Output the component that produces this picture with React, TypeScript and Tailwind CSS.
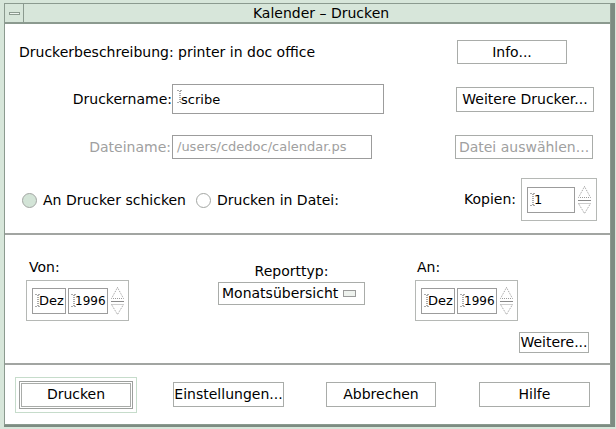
import React from 'react';

const IBeam = () => (
  <svg width="6" height="13" viewBox="0 0 6 13" className="mr-[-2px] shrink-0">
    <path d="M0.5 0.5h2M3.5 0.5h2M3 1v11M0.5 12.5h2M3.5 12.5h2" stroke="#555" strokeWidth="1" strokeDasharray="1 1" fill="none" />
  </svg>
);

const SpinArrows = () => (
  <svg width="15" height="30" viewBox="0 0 15 30" className="shrink-0">
    <path d="M7.5 1.5L13.5 12.5H1.5Z" fill="none" stroke="#9a9a9a" strokeDasharray="1 1" />
    <path d="M1 15.5H14" stroke="#8a8a8a" />
    <path d="M1.5 18.5H13.5L7.5 28.5Z" fill="none" stroke="#9a9a9a" strokeDasharray="1 1" />
  </svg>
);

function Button({ label, className = '', disabled = false }: { label: string; className?: string; disabled?: boolean }) {
  return (
    <div
      className={`flex items-center justify-center border border-[#a9aca9] bg-white ${disabled ? 'text-[#a0a0a0]' : 'text-black'} ${className}`}
    >
      {label}
    </div>
  );
}

function Field({ value, className = '', disabled = false }: { value: string; className?: string; disabled?: boolean }) {
  return (
    <div className={`flex items-center overflow-hidden whitespace-nowrap border border-[#9c9c9c] bg-white pl-[4px] ${className}`}>
      {!disabled && <IBeam />}
      <span className={disabled ? 'text-[#a0a0a0]' : 'text-black'}>{value}</span>
    </div>
  );
}

function DateSpin() {
  return (
    <div className="flex h-[41px] w-[103px] items-center gap-[2px] border border-[#b5b8b5] pl-[5px]">
      <Field value="Dez" className="h-[26px] w-[34px] !pl-[2px] text-[13px]" />
      <Field value="1996" className="h-[26px] w-[40px] !pl-[2px] text-[12px]" />
      <SpinArrows />
    </div>
  );
}

function Radio({ checked }: { checked?: boolean }) {
  return (
    <span
      className={`inline-block h-[15px] w-[15px] rounded-full border border-[#a3a6a3] ${checked ? 'bg-[#d3e4d7]' : 'bg-white'}`}
    />
  );
}

export default function App() {
  return (
    <div className="h-[429px] w-[616px] bg-[#d7e6da] pl-[4px] pt-[3px] pr-[1px] font-['DejaVu_Sans',sans-serif] text-[14px] text-black">
      <div className="flex h-[424px] flex-col border-r-[4px] border-b-[2px] border-[#7d8c82]">
        <div className="flex h-full flex-col border border-[#8b9a8f] bg-white">
          {/* Title bar */}
          <div className="flex h-[20px] shrink-0 border-b-2 border-[#8b9a8f] bg-[#d7e6da]">
            <div className="flex w-[19px] items-center justify-center border-r border-[#8b9a8f]">
              <span className="block h-[3px] w-[11px] border border-[#8b9a8f] bg-[#eef5ef]" />
            </div>
            <div className="flex flex-1 items-center justify-center pl-[8px] pt-[1px]">Kalender – Drucken</div>
          </div>

          {/* Printer section */}
          <div className="flex h-[211px] shrink-0 flex-col border-b-2 border-[#a2a5a2] pt-[16px]">
            <div className="flex h-[24px] items-center">
              <span className="w-[452px] pl-[14px]">Druckerbeschreibung: printer in doc office</span>
              <Button label="Info..." className="h-[24px] w-[110px]" />
            </div>
            <div className="mt-[20px] flex h-[30px] items-center">
              <span className="w-[167px] text-right">Druckername:</span>
              <Field value="scribe" className="h-[30px] w-[212px] items-start pt-[5px] text-[13px]" />
              <Button label="Weitere Drucker..." className="ml-[72px] h-[25px] w-[138px]" />
            </div>
            <div className="mt-[21px] flex h-[24px] items-center">
              <span className="w-[166px] text-right text-[#a0a0a0]">Dateiname:</span>
              <div className="ml-[1px]">
                <Field value="/users/cdedoc/calendar.ps" disabled className="h-[24px] w-[200px] text-[13px]" />
              </div>
              <Button label="Datei auswählen..." disabled className="ml-[83px] h-[24px] w-[138px]" />
            </div>
            <div className="mt-[19px] flex items-start">
              <div className="flex h-[43px] items-center gap-[6px] pl-[17px] pt-[1px]">
                <Radio checked />
                <span>An Drucker schicken</span>
                <span className="ml-[4px] flex"><Radio /></span>
                <span>Drucken in Datei:</span>
              </div>
              <div className="ml-auto mr-[13px] flex h-[43px] items-center gap-[5px]">
                <span>Kopien:</span>
                <div className="flex h-[43px] w-[76px] items-center gap-[2px] border border-[#b5b8b5] pl-[5px]">
                  <Field value="1" className="h-[26px] w-[48px] !pl-[2px] text-[13px]" />
                  <SpinArrows />
                </div>
              </div>
            </div>
          </div>

          {/* Date range section */}
          <div className="flex h-[130px] shrink-0 flex-col border-b-2 border-[#a2a5a2] pt-[24px]">
            <div className="flex items-start">
              <div className="ml-[21px] flex flex-col">
                <span className="pl-[3px] leading-[16px]">Von:</span>
                <div className="mt-[5px]"><DateSpin /></div>
              </div>
              <div className="ml-[89px] flex w-[147px] flex-col items-center">
                <span className="pt-[4px] leading-[16px]">Reporttyp:</span>
                <div className="mt-[3px] flex h-[23px] w-[147px] items-center justify-between border border-[#a9aca9] pl-[3px] pr-[8px]">
                  <span>Monatsübersicht</span>
                  <span className="block h-[7px] w-[13px] border border-[#9a9a9a] bg-[#eef2ee]" />
                </div>
              </div>
              <div className="ml-[50px] flex flex-col">
                <span className="pl-[2px] leading-[16px]">An:</span>
                <div className="mt-[5px]"><DateSpin /></div>
              </div>
            </div>
            <div className="mt-[11px] flex justify-end pr-[21px]">
              <Button label="Weitere..." className="h-[21px] w-[70px]" />
            </div>
          </div>

          {/* Action buttons */}
          <div className="flex flex-1 items-center pl-[10px]">
            <div className="border border-[#c6dccb] p-[3px]">
              <div className="border border-[#9c9f9c] p-[1px]">
                <Button label="Drucken" className="h-[24px] w-[110px]" />
              </div>
            </div>
            <Button label="Einstellungen..." className="ml-[36px] h-[25px] w-[111px]" />
            <Button label="Abbrechen" className="ml-[42px] h-[25px] w-[110px]" />
            <Button label="Hilfe" className="ml-[43px] h-[25px] w-[111px]" />
          </div>
        </div>
      </div>
    </div>
  );
}
